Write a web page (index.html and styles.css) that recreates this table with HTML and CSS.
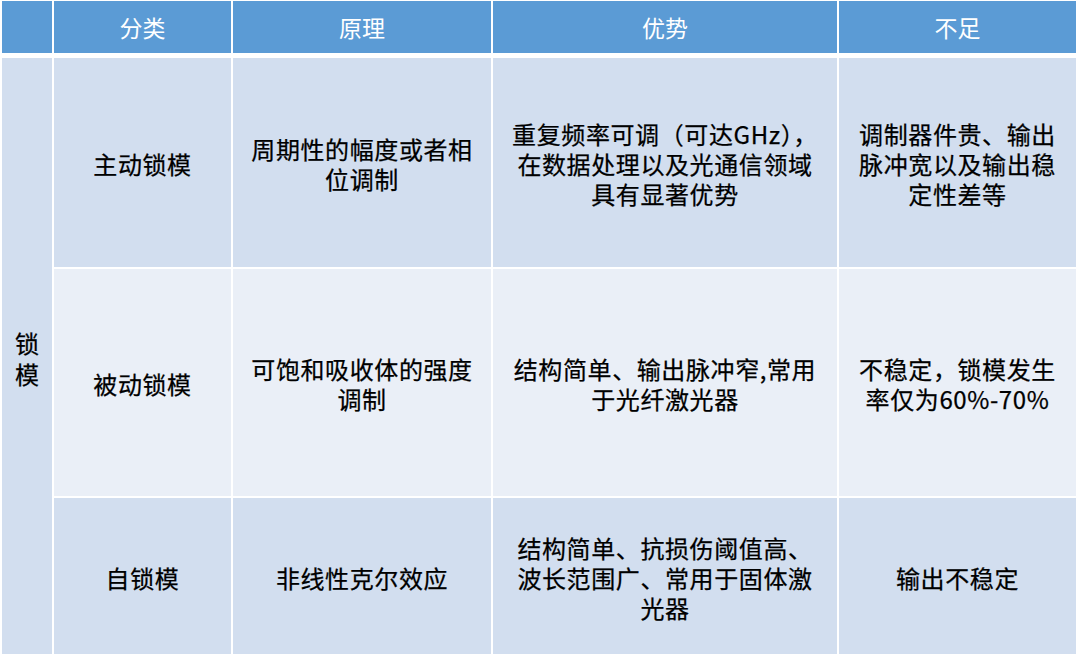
FILE: index.html
```html
<!DOCTYPE html>
<html lang="zh-CN">
<head>
<meta charset="utf-8">
<title>锁模分类</title>
<link rel="stylesheet" href="styles.css">
</head>
<body>
<div class="page">
  <div class="head">
    <div class="hcell"></div>
    <div class="hcell">分类</div>
    <div class="hcell">原理</div>
    <div class="hcell">优势</div>
    <div class="hcell">不足</div>
  </div>
  <div class="body">
    <div class="cell side"><span class="vert">锁<br>模</span></div>

    <div class="cell dark">主动锁模</div>
    <div class="cell dark">周期性的幅度或者相<br>位调制</div>
    <div class="cell dark">重复频率可调（可达GHz），<br>在数据处理以及光通信领域<br>具有显著优势</div>
    <div class="cell dark">调制器件贵、输出<br>脉冲宽以及输出稳<br>定性差等</div>

    <div class="cell light">被动锁模</div>
    <div class="cell light">可饱和吸收体的强度<br>调制</div>
    <div class="cell light">结构简单、输出脉冲窄,常用<br>于光纤激光器</div>
    <div class="cell light">不稳定，锁模发生<br>率仅为60%-70%</div>

    <div class="cell dark">自锁模</div>
    <div class="cell dark">非线性克尔效应</div>
    <div class="cell dark">结构简单、抗损伤阈值高、<br>波长范围广、常用于固体激<br>光器</div>
    <div class="cell dark">输出不稳定</div>
  </div>
</div>
</body>
</html>
```

FILE: styles.css
```css
html, body {
  margin: 0;
  padding: 0;
  background: #ffffff;
}

body {
  font-family: "Noto Sans CJK SC", "Noto Sans", "Liberation Sans", sans-serif;
  color: #000000;
}

.page {
  width: 1080px;
  height: 658px;
  box-sizing: border-box;
  padding: 1px 0 0 2px;
  display: flex;
  flex-direction: column;
  gap: 5px;
}

.head,
.body {
  display: grid;
  grid-template-columns: 50px 177px 258px 344px 237px;
  column-gap: 2px;
}

.head {
  height: 52px;
}

.body {
  grid-template-rows: 209px 227px 156px;
  row-gap: 2px;
}

.hcell {
  background: #5b9bd5;
  color: #ffffff;
  font-size: 23px;
  display: flex;
  align-items: center;
  justify-content: center;
  box-sizing: border-box;
}

.cell {
  display: flex;
  align-items: center;
  justify-content: center;
  text-align: center;
  font-size: 24px;
  line-height: 30px;
  white-space: nowrap;
  letter-spacing: 0.6px;
  -webkit-text-stroke: 0.25px #000000;
  padding-top: 3px;
  box-sizing: border-box;
}

.dark {
  background: #d2deef;
}

.light {
  background: #eaeff7;
}

.side {
  grid-row: 1 / 4;
  grid-column: 1;
  background: #d2deef;
  padding-top: 4px;
  letter-spacing: 0;
}

.vert {
  line-height: 31px;
}
```
